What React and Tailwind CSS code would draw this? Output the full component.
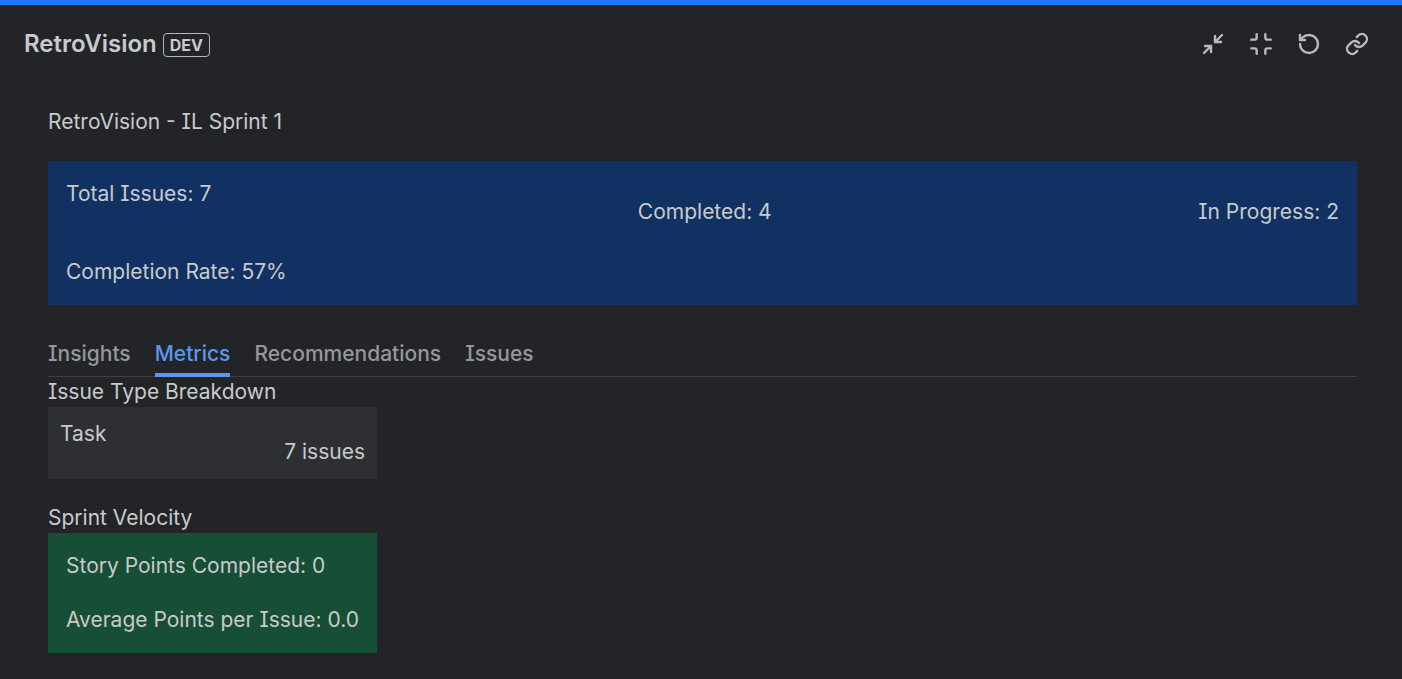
import { Minimize2, Minimize, RotateCcw, Link } from 'lucide-react';

const tabs = ['Insights', 'Metrics', 'Recommendations', 'Issues'];

export default function App() {
  return (
    <div className="min-h-[679px] bg-[#232428] text-[21px] leading-[28px] text-[#c9cacc] font-['Inter',sans-serif] [font-feature-settings:'cv08'] overflow-hidden">
      <div className="h-[5px] bg-[#1f75fe]" />

      <header className="h-[78px] pl-6 pr-[33px] flex items-center justify-between">
        <div className="flex items-center gap-[6px]">
          <span className="text-[24px] font-semibold">RetroVision</span>
          <span className="h-[24px] px-[6px] mt-[2px] flex items-center border border-[#b5b6b8] rounded-[4px] text-[16px] font-bold leading-none">DEV</span>
        </div>
        <div className="flex items-center gap-6 text-[#b9babc]">
          <Minimize2 className="w-6 h-6" strokeWidth={2.4} />
          <Minimize className="w-[26px] h-[26px] -mx-px" strokeWidth={2.2} />
          <RotateCcw className="w-6 h-6" strokeWidth={2.4} />
          <Link className="w-6 h-6" strokeWidth={2.4} />
        </div>
      </header>

      <main className="pl-12 pr-[45px]">
        <h1 className="pt-[25px] text-[21px] font-normal">RetroVision - IL Sprint 1</h1>

        <section className="mt-[25px] h-[144px] bg-[#113162] px-[18px] pt-[19px]">
          <div className="h-[64px] flex justify-between items-center">
            <span className="self-start">Total Issues: 7</span>
            <span>Completed: 4</span>
            <span>In Progress: 2</span>
          </div>
          <div className="mt-[14px]">Completion Rate: 57%</div>
        </section>

        <nav className="mt-[24px] flex gap-6 border-b border-[#3d3e42] h-[48px]">
          {tabs.map((tab) => (
            <span
              key={tab}
              className={tab === 'Metrics'
                ? 'h-[48px] pt-[11px] font-medium border-b-[4px] border-[#5b97ec] text-[#5b97ec]'
                : 'h-[48px] pt-[11px] font-medium text-[#96979a]'}
            >
              {tab}
            </span>
          ))}
        </nav>

        <h2 className="pt-px text-[21px] font-normal">Issue Type Breakdown</h2>
        <div className="w-[329px] h-[72px] mt-px bg-[#2e2f33] px-3 pt-[13px]">
          <div>Task</div>
          <div className="text-right -mt-[10px]">7 issues</div>
        </div>

        <h2 className="mt-[25px] text-[21px] font-normal">Sprint Velocity</h2>
        <div className="w-[329px] h-[120px] mt-px bg-[#174e36] px-[18px] pt-[19px]">
          <p>Story Points Completed: 0</p>
          <p className="mt-[26px]">Average Points per Issue: 0.0</p>
        </div>
      </main>
    </div>
  );
}
